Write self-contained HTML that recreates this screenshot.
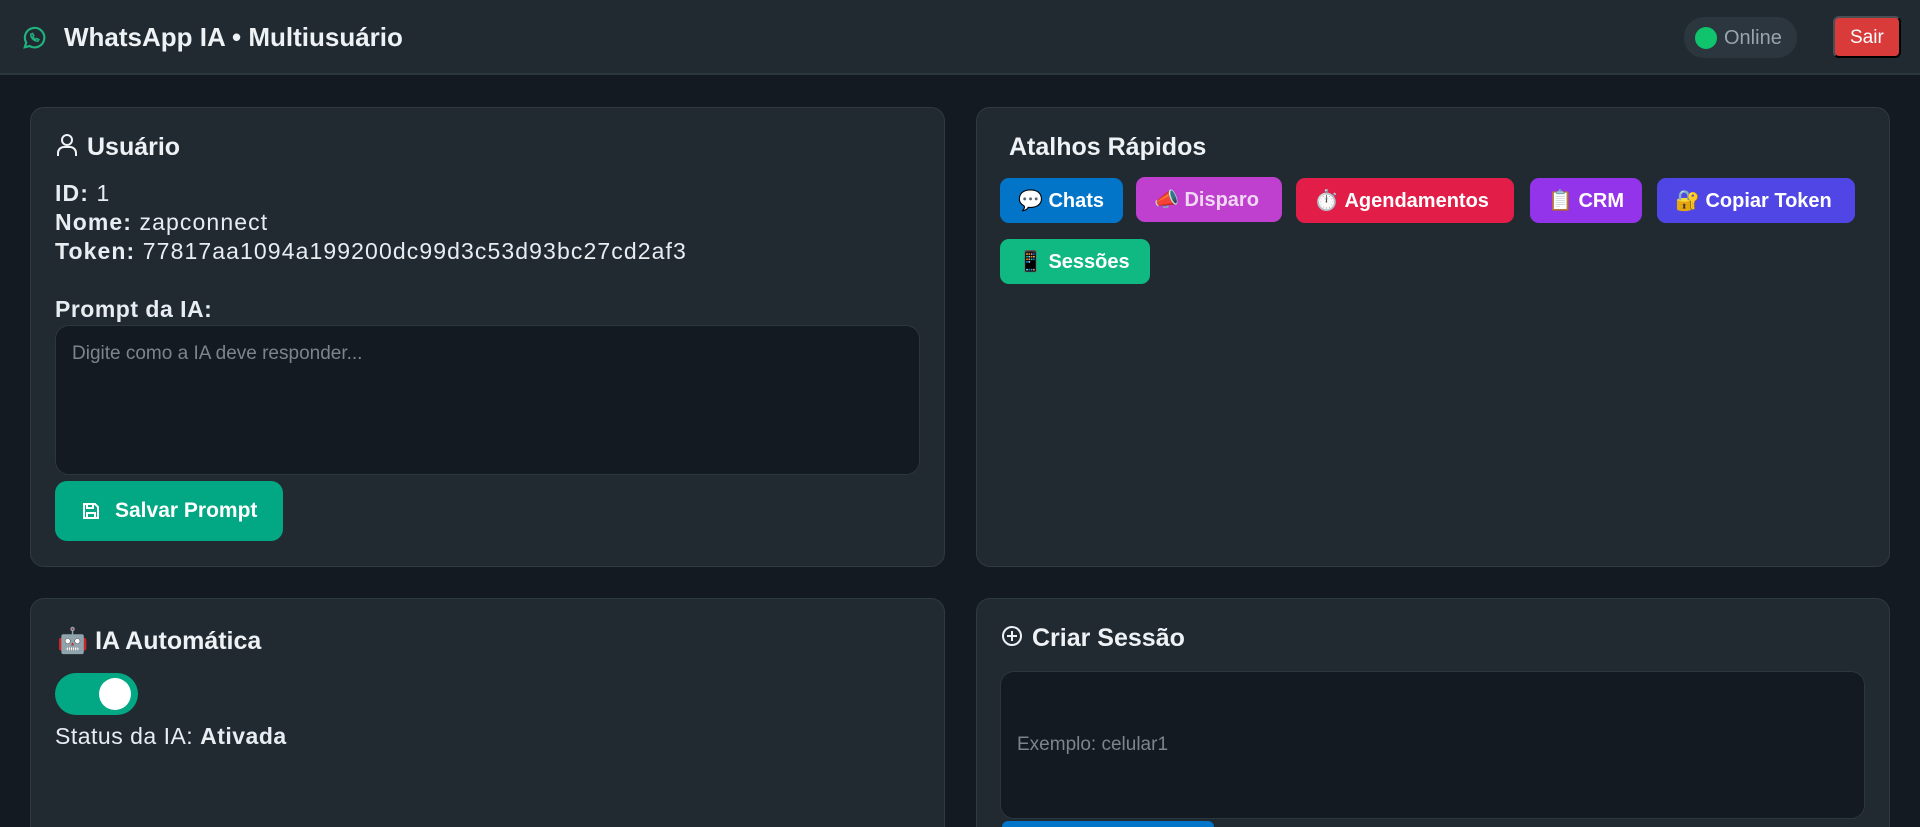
<!DOCTYPE html>
<html style="height:827px;overflow:hidden"><head><meta charset="utf-8">
<style>
*{box-sizing:border-box;margin:0;padding:0}
body{width:1920px;height:827px;overflow:hidden;background:#141a21;font-family:"Liberation Sans","Noto Sans CJK SC",sans-serif;color:#e8edf1;position:relative}
.hdr{position:absolute;left:0;top:0;width:1920px;height:75px;background:#212a31;border-bottom:2px solid #2c363f}
.abs{position:absolute}
.card{position:absolute;background:#212a31;border:1px solid #2f3a44;border-radius:14px}
.t{position:absolute;white-space:nowrap}
.h{font-size:25px;font-weight:bold;color:#eef2f5}
.b{font-size:23px;color:#e8edf1;letter-spacing:1.1px}
.btn{position:absolute;height:45px;border-radius:9px;color:#fff;font-weight:bold;font-size:20px;display:flex;align-items:center;padding-left:18px;white-space:nowrap}
.ta{position:absolute;background:#131a21;border:1px solid #2c363f;border-radius:14px}
</style></head><body>
<div class="hdr"></div>
<svg class="abs" style="left:21px;top:25px" width="26" height="26" viewBox="0 0 24 24" fill="none" stroke="#1fb27f" stroke-width="2"><path d="M3.5 20.5l1.3-4.3A9 9 0 1 1 8 19.4z"/><path d="M9 8.5c0 3.5 3 6.5 6.5 6.5l1-1.5-2-1-1 .8c-1-.5-2-1.5-2.5-2.5l.8-1-1-2z" stroke-width="1.4"/></svg>
<div class="t" style="left:64px;top:22px;font-size:26px;font-weight:bold;color:#eef2f5">WhatsApp IA • Multiusuário</div>
<div class="abs" style="left:1684px;top:17px;width:113px;height:41px;border-radius:20px;background:#2c363f"></div>
<div class="abs" style="left:1695px;top:27px;width:22px;height:22px;border-radius:50%;background:#0fc46c"></div>
<div class="t" style="left:1724px;top:27px;font-size:20px;color:#9aa4ad">Online</div>
<div class="abs" style="left:1833px;top:16px;width:68px;height:42px;border-radius:6px;background:#d93a3a;border:2px solid #4a4f55;border-right-color:#000;border-bottom-color:#000"></div>
<div class="t" style="left:1850px;top:27px;font-size:19px;color:#fff">Sair</div>

<div class="card" style="left:30px;top:107px;width:915px;height:460px"></div>
<svg class="abs" style="left:56px;top:133px" width="22" height="24" viewBox="0 0 22 24" fill="none" stroke="#eef2f5" stroke-width="2"><circle cx="11" cy="7" r="5"/><path d="M2 23v-3a6 6 0 0 1 6-6h6a6 6 0 0 1 6 6v3"/></svg>
<div class="t h" style="left:87px;top:133px">Usuário</div>
<div class="t b" style="left:55px;top:180px"><b>ID:</b> 1</div>
<div class="t b" style="left:55px;top:209px"><b>Nome:</b> zapconnect</div>
<div class="t b" style="left:55px;top:238px"><b>Token:</b> 77817aa1094a199200dc99d3c53d93bc27cd2af3</div>
<div class="t b" style="left:55px;top:296px;font-weight:bold;letter-spacing:0.5px">Prompt da IA:</div>
<div class="ta" style="left:55px;top:325px;width:865px;height:150px"></div>
<div class="t" style="left:72px;top:343px;font-size:19px;color:#7d858c">Digite como a IA deve responder...</div>
<div class="btn" style="left:55px;top:481px;width:228px;height:60px;border-radius:12px;background:#02a884;padding-left:27px;font-size:21px">
<svg width="18" height="18" viewBox="0 0 18 18" fill="none" stroke="#fff" stroke-width="2" style="margin-right:15px"><path d="M2 2h11l3 3v11H2z"/><path d="M5 2v4h6V2M5 16v-5h8v5"/></svg>Salvar Prompt</div>

<div class="card" style="left:976px;top:107px;width:914px;height:460px"></div>
<div class="t h" style="left:1009px;top:133px">Atalhos Rápidos</div>
<div class="btn" style="left:1000px;top:178px;width:123px;background:#0275c8">💬&nbsp;Chats</div>
<div class="btn" style="left:1136px;top:177px;width:146px;background:#bf3fcf;color:#f0d8f2">📣&nbsp;Disparo</div>
<div class="btn" style="left:1296px;top:178px;width:218px;background:#e11d48">⏱️&nbsp;Agendamentos</div>
<div class="btn" style="left:1530px;top:178px;width:112px;background:#9333ea">📋&nbsp;CRM</div>
<div class="btn" style="left:1657px;top:178px;width:198px;background:#4f46e5">🔐&nbsp;Copiar Token</div>
<div class="btn" style="left:1000px;top:239px;width:150px;background:#10b981">📱&nbsp;Sessões</div>

<div class="card" style="left:30px;top:598px;width:915px;height:229px;border-bottom:none;border-radius:14px 14px 0 0"></div>
<div class="t h" style="left:57px;top:627px">🤖 IA Automática</div>
<div class="abs" style="left:55px;top:673px;width:83px;height:42px;border-radius:21px;background:#02a884"></div>
<div class="abs" style="left:99px;top:678px;width:32px;height:32px;border-radius:50%;background:#fff"></div>
<div class="t b" style="left:55px;top:723px;letter-spacing:0.5px">Status da IA: <b>Ativada</b></div>

<div class="card" style="left:976px;top:598px;width:914px;height:229px;border-bottom:none;border-radius:14px 14px 0 0"></div>
<svg class="abs" style="left:1001px;top:625px" width="22" height="22" viewBox="0 0 22 22" fill="none" stroke="#eef2f5" stroke-width="2"><circle cx="11" cy="11" r="9"/><path d="M11 6v10M6 11h10"/></svg>
<div class="t h" style="left:1032px;top:624px">Criar Sessão</div>
<div class="ta" style="left:1000px;top:671px;width:865px;height:148px"></div>
<div class="t" style="left:1017px;top:734px;font-size:19px;color:#7d858c">Exemplo: celular1</div>
<div class="abs" style="left:1002px;top:821px;width:212px;height:6px;border-radius:6px 6px 0 0;background:#0275c8"></div>
</body></html>
